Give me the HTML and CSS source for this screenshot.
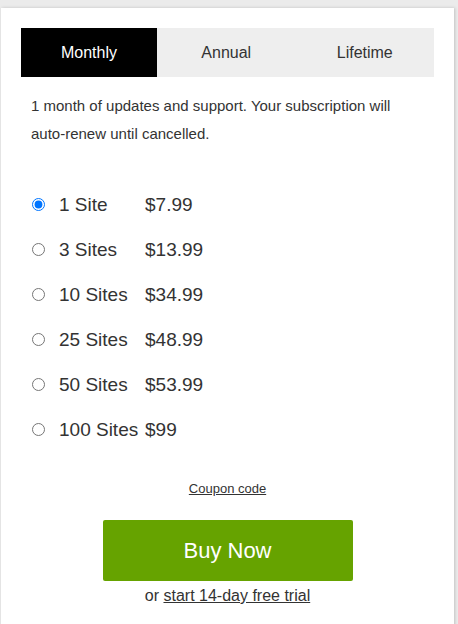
FILE: index.html
```html
<!DOCTYPE html>
<html>
<head>
<meta charset="utf-8">
<link rel="stylesheet" href="styles.css">
</head>
<body>
<div class="card">
  <div class="tabs">
    <div class="tab active">Monthly</div>
    <div class="tab">Annual</div>
    <div class="tab">Lifetime</div>
  </div>
  <p class="desc">1 month of updates and support. Your subscription will auto-renew until cancelled.</p>
  <div class="options">
    <label class="opt"><input type="radio" name="plan" checked><span class="name">1 Site</span><span class="price">$7.99</span></label>
    <label class="opt"><input type="radio" name="plan"><span class="name">3 Sites</span><span class="price">$13.99</span></label>
    <label class="opt"><input type="radio" name="plan"><span class="name">10 Sites</span><span class="price">$34.99</span></label>
    <label class="opt"><input type="radio" name="plan"><span class="name">25 Sites</span><span class="price">$48.99</span></label>
    <label class="opt"><input type="radio" name="plan"><span class="name">50 Sites</span><span class="price">$53.99</span></label>
    <label class="opt"><input type="radio" name="plan"><span class="name">100 Sites</span><span class="price">$99</span></label>
  </div>
  <div class="coupon"><a href="#">Coupon code</a></div>
  <div class="buy-wrap"><a class="buy" href="#">Buy Now</a></div>
  <div class="trial">or <a href="#">start 14-day free trial</a></div>
</div>
</body>
</html>
```
FILE: styles.css
```css
html, body {
  margin: 0;
  padding: 0;
}
body {
  background: #ebebeb;
  font-family: "Liberation Sans", Arial, sans-serif;
  color: #333;
  height: 624px;
  overflow: hidden;
}
.card {
  background: #fff;
  margin: 8px 0 0 1px;
  width: 453px;
  min-height: 640px;
  box-sizing: border-box;
  padding: 20px 20px 0 20px;
  box-shadow: 1px 0 3px rgba(0, 0, 0, 0.18);
}
.tabs {
  display: grid;
  grid-template-columns: 136px 1fr 1fr;
  background: #eeeeee;
  height: 49px;
}
.tab {
  display: flex;
  align-items: center;
  justify-content: center;
  font-size: 16px;
  color: #333;
}
.tab.active {
  background: #000;
  color: #fff;
}
.desc {
  margin: 15px 20px 0 10px;
  font-size: 15px;
  line-height: 28px;
  color: #333;
}
.options {
  margin-top: 34px;
  display: flex;
  flex-direction: column;
}
.opt {
  display: flex;
  align-items: center;
  height: 45px;
  font-size: 19px;
  color: #333;
}
.opt input {
  margin: 0 14px 0 11px;
  width: 13px;
  height: 13px;
}
.name {
  min-width: 80px;
  margin-right: 6px;
}
.coupon {
  text-align: center;
  font-size: 13px;
  margin-top: 29px;
  line-height: 16px;
}
.coupon a, .trial a {
  color: #333;
}
.buy-wrap {
  display: flex;
  justify-content: center;
  margin-top: 23px;
}
.buy {
  display: flex;
  align-items: center;
  justify-content: center;
  width: 250px;
  height: 61px;
  background: #66a300;
  color: #fff;
  font-size: 22px;
  text-decoration: none;
  border-radius: 2px;
}
.trial {
  text-align: center;
  font-size: 16px;
  margin-top: 5px;
  line-height: 20px;
}
```
